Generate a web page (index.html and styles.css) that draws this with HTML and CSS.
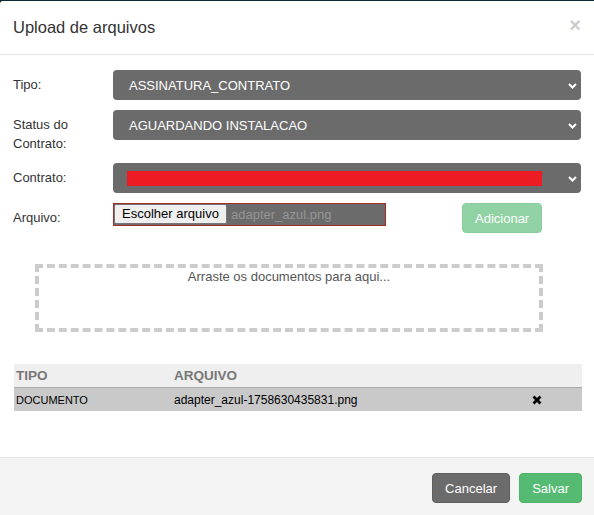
FILE: index.html
```html
<!DOCTYPE html>
<html lang="pt-BR">
<head>
    <meta charset="UTF-8">
    <meta name="viewport" content="width=device-width, initial-scale=1.0">
    <title>Upload de arquivos</title>
    <link rel="stylesheet" href="styles.css">
</head>
<body>
    <div class="modal">
        <!-- cabeçalho -->
        <div class="modal-header">
            <h4 class="modal-title">Upload de arquivos</h4>
            <span class="close">&times;</span>
        </div>

        <div class="modal-body">
            <div class="form-grid">
                <label>Tipo:</label>
                <div class="select">
                    <span>ASSINATURA_CONTRATO</span>
                    <svg class="caret" width="9" height="6" viewBox="0 0 9 6"><path d="M1 1 L4.5 4.5 L8 1" fill="none" stroke="#fff" stroke-width="2"/></svg>
                </div>

                <label>Status do<br>Contrato:</label>
                <div class="select">
                    <span>AGUARDANDO INSTALACAO</span>
                    <svg class="caret" width="9" height="6" viewBox="0 0 9 6"><path d="M1 1 L4.5 4.5 L8 1" fill="none" stroke="#fff" stroke-width="2"/></svg>
                </div>

                <label>Contrato:</label>
                <div class="select">
                    <span class="redacted"></span>
                    <svg class="caret" width="9" height="6" viewBox="0 0 9 6"><path d="M1 1 L4.5 4.5 L8 1" fill="none" stroke="#fff" stroke-width="2"/></svg>
                </div>

                <label>Arquivo:</label>
                <div class="file-row">
                    <div class="file-input">
                        <span class="file-btn">Escolher arquivo</span>
                        <span class="file-name">adapter_azul.png</span>
                    </div>
                    <button class="btn btn-success disabled">Adicionar</button>
                </div>
            </div>

            <!-- área de arrastar -->
            <div class="dropzone">Arraste os documentos para aqui...</div>

            <table class="docs">
                <thead>
                    <tr>
                        <th class="col-tipo">TIPO</th>
                        <th>ARQUIVO</th>
                        <th class="col-acao"></th>
                    </tr>
                </thead>
                <tbody>
                    <tr>
                        <td>DOCUMENTO</td>
                        <td class="col-arquivo">adapter_azul-1758630435831.png</td>
                        <td class="col-acao">
                            <svg width="10" height="10" viewBox="0 0 10 10"><path d="M1.5 1.5 L8.5 8.5 M8.5 1.5 L1.5 8.5" stroke="#000" stroke-width="2.8"/></svg>
                        </td>
                    </tr>
                </tbody>
            </table>
        </div>

        <div class="modal-footer">
            <button class="btn btn-default">Cancelar</button>
            <button class="btn btn-success">Salvar</button>
        </div>
    </div>
</body>
</html>
```

FILE: styles.css
```css
body {
    margin: 0;
    padding-top: 1px;
    height: 514px;
    overflow: hidden;
    background: #0d2a31;
    font-family: "Liberation Sans", Arial, sans-serif;
    font-size: 13px;
    color: #333;
}

.modal {
    background: #fff;
    border-radius: 3px 0 0 0;
}

/* cabeçalho */
.modal-header {
    display: flex;
    justify-content: space-between;
    align-items: flex-start;
    padding: 15px 13px 16px 13px;
    border-bottom: 1px solid #e5e5e5;
}

.modal-title {
    margin: 0;
    font-size: 16.5px;
    font-weight: normal;
    line-height: 22px;
}

.close {
    font-size: 20px;
    font-weight: bold;
    line-height: 18px;
    color: #000;
    opacity: 0.2;
}

/* formulário */
.modal-body {
    padding: 15px 13px 46px 13px;
}

.form-grid {
    display: grid;
    grid-template-columns: 100px 1fr;
    row-gap: 10px;
}

.form-grid label {
    padding-top: 5px;
    line-height: 19px;
}

.select {
    display: flex;
    align-items: center;
    justify-content: space-between;
    height: 30px;
    padding: 0 4px 0 16px;
    background: #6b6b6b;
    border-radius: 4px;
    color: #fff;
}

.redacted {
    display: block;
    width: 415px;
    height: 15px;
    margin-left: -2px;
    background: #ed1c24;
}

.caret {
    margin-top: 1px;
}

.file-row {
    display: flex;
    align-items: flex-start;
}

.file-input {
    display: flex;
    align-items: center;
    width: 273px;
    height: 23px;
    box-sizing: border-box;
    border: 1px solid #a52a2a;
    background: #6b6b6b;
}

.file-btn {
    height: 20px;
    line-height: 18px;
    box-sizing: border-box;
    width: 113px;
    margin-top: -1px;
    text-align: center;
    background: #efefef;
    border: 1px solid #767676;
    border-radius: 2px;
    color: #000;
}

.file-name {
    margin-left: 4px;
    color: #959595;
}

.btn {
    height: 30px;
    padding: 0 12px;
    border: 1px solid transparent;
    border-radius: 4px;
    font-family: inherit;
    font-size: 13px;
    color: #fff;
}

.btn-success {
    background: #55bb73;
    border-color: #4fb36c;
}

.btn-default {
    background: #6b6b6b;
    border-color: #5f5f5f;
}

.btn.disabled {
    width: 80px;
    margin-left: 76px;
    opacity: 0.65;
}

/* área de arrastar */
.dropzone {
    height: 68px;
    box-sizing: border-box;
    margin: 31px 38px 0 22px;
    border: 4px dashed #ccc;
    line-height: 18px;
    text-align: center;
    color: #555;
}

/* tabela de documentos */
.docs {
    width: 568px;
    margin: 32px 0 0 1px;
    border-collapse: collapse;
}

.docs th {
    height: 23px;
    padding: 0 2px;
    text-align: left;
    background: #efefef;
    border-bottom: 1px solid #aaa;
    color: #777;
    font-size: 13.5px;
    font-weight: bold;
}

.docs td {
    height: 23px;
    padding: 0 2px;
    background: #c9c9c9;
    color: #000;
    font-size: 11px;
}

.docs .col-arquivo {
    font-size: 12px;
}

.col-tipo {
    width: 154px;
}

.docs .col-acao {
    width: 86px;
    text-align: center;
}

.col-acao svg {
    display: block;
    margin: 0 auto;
}

/* rodapé */
.modal-footer {
    display: flex;
    justify-content: flex-end;
    gap: 9px;
    height: 70px;
    padding: 15px 12px 0 0;
    background: #f4f4f4;
    border-top: 1px solid #e5e5e5;
}
```
